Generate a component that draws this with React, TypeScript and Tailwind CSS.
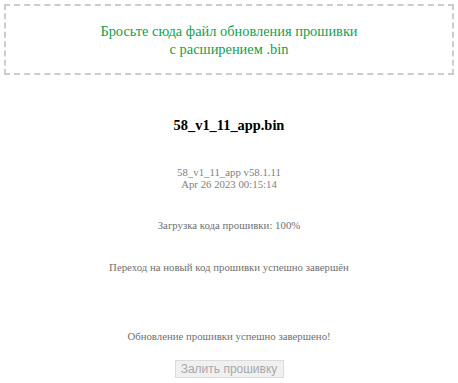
export default function App() {
  return (
    <div className="w-[458px] h-[383px] bg-white p-1 font-['Liberation_Serif',serif] text-center">
      <div className="h-[71px] border-2 border-dashed border-[#cccccc] flex flex-col items-center justify-center text-[14.4px] leading-[18px] text-[#10a050]">
        <div>Бросьте сюда файл обновления прошивки</div>
        <div>с расширением .bin</div>
      </div>
      <div className="mt-[42px] text-[14.4px] font-bold leading-[16px] text-black">58_v1_11_app.bin</div>
      <div className="mt-[33px] text-[10.8px] leading-[12px] text-[#808080]">
        <div>58_v1_11_app v58.1.11</div>
        <div>Apr 26 2023 00:15:14</div>
      </div>
      <div className="mt-[28px] text-[10.8px] leading-[14px] text-[#707070]">Загрузка кода прошивки: 100%</div>
      <div className="mt-[28px] text-[10.8px] leading-[14px] text-[#707070]">Переход на новый код прошивки успешно завершён</div>
      <div className="mt-[55px] text-[10.8px] leading-[14px] text-[#707070]">Обновление прошивки успешно завершено!</div>
      <div className="mt-[17px] flex justify-center">
        <button disabled className="h-[18px] w-[109px] border border-[#dcdcdc] bg-[#f0f0f0] text-[12px] leading-[16px] text-[#a8a8a8] font-['Liberation_Sans',Arial,sans-serif]">
          Залить прошивку
        </button>
      </div>
    </div>
  );
}
